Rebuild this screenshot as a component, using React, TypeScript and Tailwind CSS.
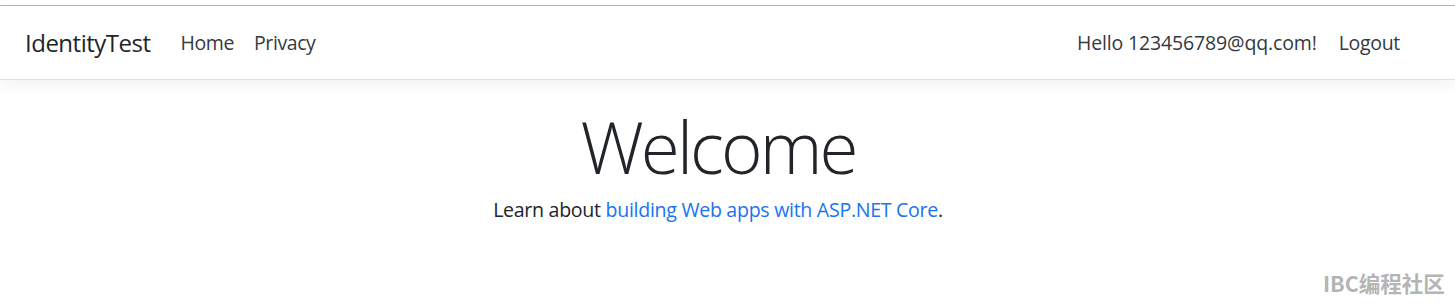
import React from "react";

// ─── Nav Data ───────────────────────────────────────────────
const NAV_LINKS = ["Home", "Privacy"];

export default function App() {
  return (
    <div
      className="relative w-[1455px] h-[308px] overflow-hidden bg-white text-[#212529]"
      style={{ fontFamily: '"Open Sans", "Noto Sans", sans-serif' }}
    >
      {/* Top window edge */}
      <div className="h-[5px] bg-white" />
      <div className="h-px bg-[#b4b4b4]" />

      {/* Navbar */}
      <header className="relative z-10 h-[74px] flex items-center pl-[25px] pr-[55px] bg-white border-b border-[#dee2e6] shadow-[0_5px_14px_rgba(0,0,0,0.05)]">
        <span className="text-[24px] text-[#212529] tracking-[-0.5px] mr-[30px]">IdentityTest</span>
        <nav className="flex items-center gap-[20px]">
          {NAV_LINKS.map((link) => (
            <span key={link} className="text-[19.5px] text-[#343a40] tracking-[-0.4px]">
              {link}
            </span>
          ))}
        </nav>
        <div className="ml-auto flex items-center gap-[22px]">
          <span className="text-[19.5px] text-[#343a40] tracking-[-0.15px]">Hello 123456789@qq.com!</span>
          <span className="text-[19.5px] text-[#343a40] tracking-[-0.3px]">Logout</span>
        </div>
      </header>

      {/* Main */}
      <main className="w-[1436px] flex flex-col items-center pt-[24px]">
        <h1 className="text-[71px] font-light leading-[1.2] tracking-[-2.9px] text-[#212529]">Welcome</h1>
        <p className="text-[19.6px] mt-[6px] tracking-[-0.3px]">
          Learn about <span className="text-[#1a73f0]">building Web apps with ASP.NET Core</span>.
        </p>
      </main>

      {/* Watermark */}
      <div
        className="absolute left-[1323px] top-[272px] text-[21.5px] font-bold text-[#b5b5b5] leading-none"
        style={{ fontFamily: '"Noto Sans CJK SC", "Noto Sans", sans-serif' }}
      >
        IBC编程社区
      </div>
    </div>
  );
}
